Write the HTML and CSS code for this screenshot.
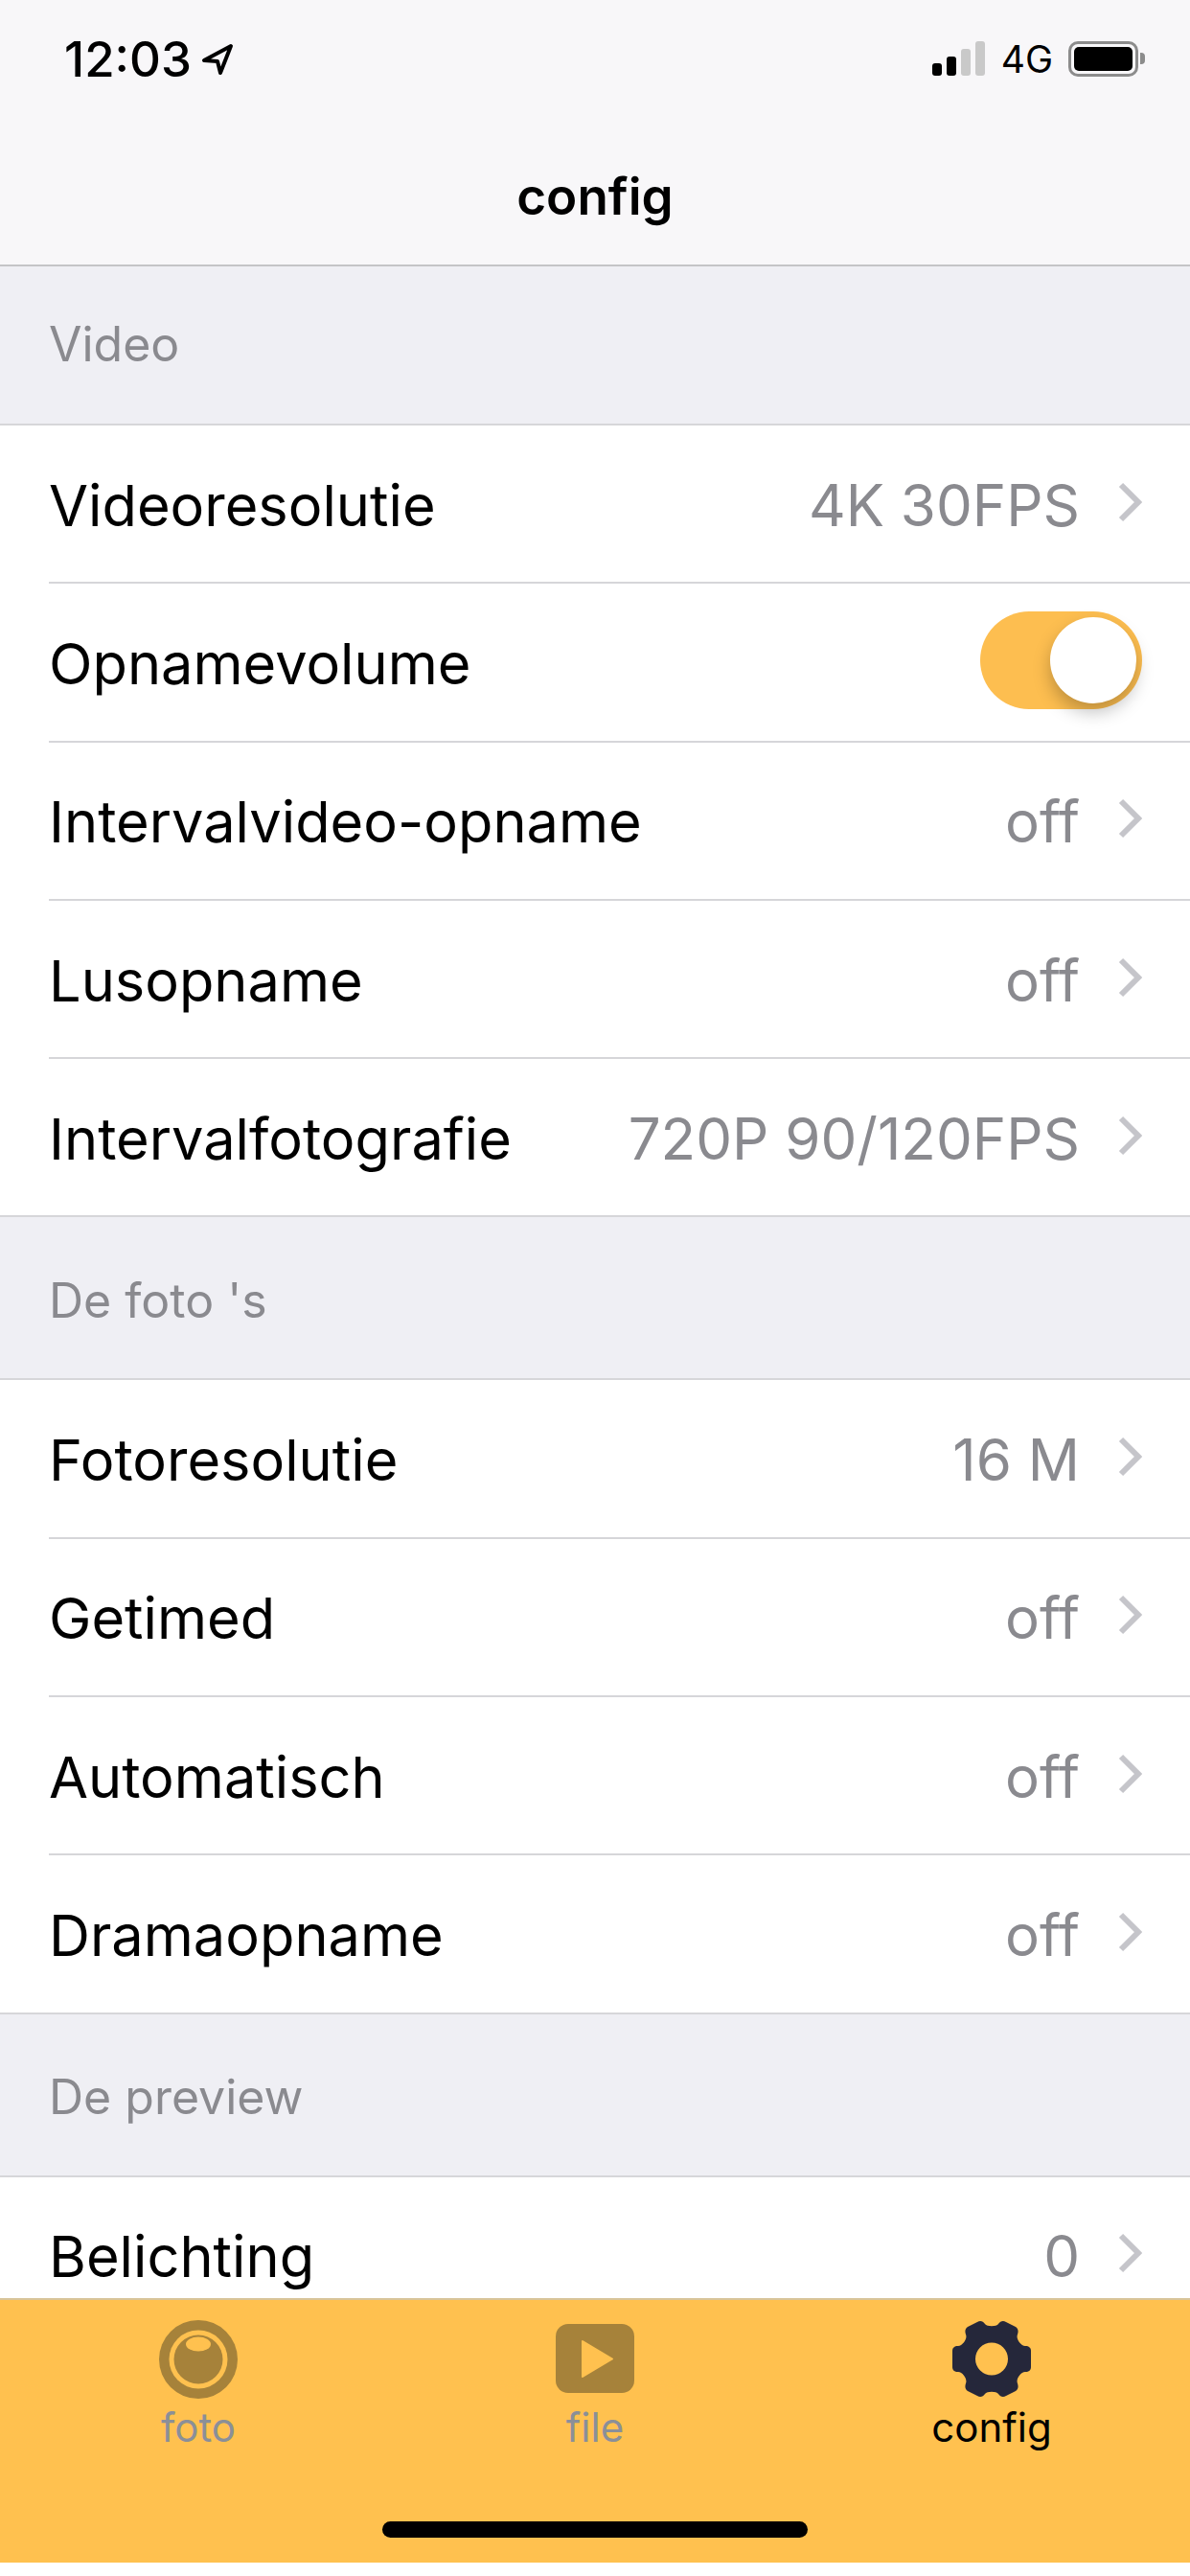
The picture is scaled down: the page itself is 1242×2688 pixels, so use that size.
FILE: index.html
```html
<!DOCTYPE html>
<html lang="en">
<head>
  <meta charset="UTF-8" />
  <meta name="viewport" content="width=device-width, initial-scale=1.0"/>
  <title>config</title>
  <link rel="stylesheet" href="styles.css">
</head>
<body>

  <div class="screen">
    <header class="topbar">
      <div class="status">
        <div class="status-left">
          <span class="clock">12:03</span>
          <svg class="locate" viewBox="0 0 34 34" width="34" height="34"><path d="M31 3 L3 18 L17 19 L20 31 Z" fill="none" stroke="#000" stroke-width="4" stroke-linejoin="round"/></svg>
        </div>
        <div class="status-right">
          <div class="signal">
            <i class="bar bar-1"></i>
            <i class="bar bar-2"></i>
            <i class="bar bar-3"></i>
            <i class="bar bar-4"></i>
          </div>
          <span class="network">4G</span>
          <div class="battery"><div class="battery-fill"></div></div>
          <div class="battery-cap"></div>
        </div>
      </div>
      <div class="nav-title">config</div>
    </header>

    <main class="list">
      <div class="section first">Video</div>
      <div class="row">
        <span class="label">Videoresolutie</span>
        <span class="value">4K 30FPS</span>
        <svg class="chevron" viewBox="0 0 26 44" width="26" height="44"><path d="M4 4 L22 22 L4 40" /></svg>
      </div>
      <div class="row">
        <span class="label">Opnamevolume</span>
        <div class="toggle"><div class="knob"></div></div>
      </div>
      <div class="row">
        <span class="label">Intervalvideo-opname</span>
        <span class="value">off</span>
        <svg class="chevron" viewBox="0 0 26 44" width="26" height="44"><path d="M4 4 L22 22 L4 40" /></svg>
      </div>
      <div class="row">
        <span class="label">Lusopname</span>
        <span class="value">off</span>
        <svg class="chevron" viewBox="0 0 26 44" width="26" height="44"><path d="M4 4 L22 22 L4 40" /></svg>
      </div>
      <div class="row last">
        <span class="label">Intervalfotografie</span>
        <span class="value">720P 90/120FPS</span>
        <svg class="chevron" viewBox="0 0 26 44" width="26" height="44"><path d="M4 4 L22 22 L4 40" /></svg>
      </div>

      <div class="section">De foto 's</div>
      <div class="row">
        <span class="label">Fotoresolutie</span>
        <span class="value">16 M</span>
        <svg class="chevron" viewBox="0 0 26 44" width="26" height="44"><path d="M4 4 L22 22 L4 40" /></svg>
      </div>
      <div class="row">
        <span class="label">Getimed</span>
        <span class="value">off</span>
        <svg class="chevron" viewBox="0 0 26 44" width="26" height="44"><path d="M4 4 L22 22 L4 40" /></svg>
      </div>
      <div class="row">
        <span class="label">Automatisch</span>
        <span class="value">off</span>
        <svg class="chevron" viewBox="0 0 26 44" width="26" height="44"><path d="M4 4 L22 22 L4 40" /></svg>
      </div>
      <div class="row last">
        <span class="label">Dramaopname</span>
        <span class="value">off</span>
        <svg class="chevron" viewBox="0 0 26 44" width="26" height="44"><path d="M4 4 L22 22 L4 40" /></svg>
      </div>

      <div class="section">De preview</div>
      <div class="row last">
        <span class="label">Belichting</span>
        <span class="value">0</span>
        <svg class="chevron" viewBox="0 0 26 44" width="26" height="44"><path d="M4 4 L22 22 L4 40" /></svg>
      </div>
    </main>

    <footer class="tabbar">
      <div class="tabs">
        <div class="tab">
          <svg viewBox="0 0 84 84" width="84" height="84">
            <circle cx="42" cy="42" r="41" fill="#a6823a"/>
            <circle cx="42" cy="42" r="30.5" fill="#ffc14f"/>
            <circle cx="42" cy="42" r="25.5" fill="#a6823a"/>
            <ellipse cx="42" cy="26" rx="13" ry="7.5" fill="#ffc14f"/>
          </svg>
          <span class="tab-label">foto</span>
        </div>
        <div class="tab">
          <svg viewBox="0 0 84 84" width="84" height="84">
            <rect x="1" y="5" width="82" height="72" rx="13" fill="#a6823a"/>
            <path d="M29 23 L60 41.5 L29 60 Z" fill="#ffc14f" stroke="#ffc14f" stroke-width="2" stroke-linejoin="round"/>
          </svg>
          <span class="tab-label">file</span>
        </div>
        <div class="tab active">
          <svg viewBox="0 0 84 84" width="84" height="84">
            <path fill-rule="evenodd" fill="#25273a" d="M27 3 C30 1 33 2 35 5 C37 8 47 8 49 5 C51 2 54 1 57 3 L67 8 C70 10 70 13 69 16 C67 20 72 28 77 28 C81 28 83 30 83 33 L83 50 C83 53 81 55 77 55 C72 55 67 63 69 67 C70 70 70 73 67 75 L57 80 C54 82 51 81 49 78 C47 75 37 75 35 78 C33 81 30 82 27 80 L17 75 C14 73 14 70 15 67 C17 63 12 55 7 55 C3 55 1 53 1 50 L1 33 C1 30 3 28 7 28 C12 28 17 20 15 16 C14 13 14 10 17 8 Z M42 24.5 A17 17 0 1 0 42 58.5 A17 17 0 1 0 42 24.5 Z"/>
          </svg>
          <span class="tab-label">config</span>
        </div>
      </div>
      <div class="home-bar"></div>
    </footer>
  </div>

</body>
</html>
```

FILE: styles.css
```css
* { box-sizing: border-box; }

body {
  margin: 0;
  background: #ffffff;
  font-family: 'Inter', 'Liberation Sans', sans-serif;
  color: #000000;
}

.screen {
  width: 1242px;
  height: 2688px;
  display: flex;
  flex-direction: column;
  overflow: hidden;
}

/* top bar */
.topbar {
  height: 278px;
  flex: none;
  background: #f8f7f9;
  border-bottom: 2px solid #c4c4c6;
}

.status {
  height: 124px;
  display: flex;
  justify-content: space-between;
  align-items: flex-start;
  padding: 38px 47px 0 67px;
}

.status-left {
  display: flex;
  align-items: center;
  gap: 10px;
}

.clock {
  font-size: 51px;
  line-height: 48px;
  font-weight: 500;
}

.status-right {
  display: flex;
  align-items: center;
  height: 46px;
}

.signal {
  display: flex;
  align-items: flex-end;
  gap: 5px;
  height: 36px;
  margin-right: 17px;
}

.bar {
  width: 10px;
  border-radius: 3px;
  background: #000000;
}

.bar-1 { height: 13px; }
.bar-2 { height: 20px; }
.bar-3 { height: 28px; background: #c9c9c9; }
.bar-4 { height: 36px; background: #c9c9c9; }

.network {
  font-size: 39px;
  margin-right: 16px;
}

.battery {
  width: 73px;
  height: 37px;
  border: 3px solid #8c8c8c;
  border-radius: 10px;
  padding: 3px;
}

.battery-fill {
  height: 100%;
  background: #000000;
  border-radius: 5px;
}

.battery-cap {
  width: 5px;
  height: 12px;
  margin-left: 2px;
  background: #8c8c8c;
  border-radius: 0 4px 4px 0;
}

.nav-title {
  text-align: center;
  font-size: 53px;
  line-height: 64px;
  font-weight: 600;
  margin-top: 49px;
}

/* settings list */
.list {
  flex: 1;
  min-height: 0;
  overflow: hidden;
  background: #ffffff;
}

.section {
  height: 170px;
  padding: 5px 51px 0;
  display: flex;
  align-items: center;
  background: #efeff4;
  border-bottom: 2px solid #d6d6d9;
  color: #8a8a8f;
  font-size: 50px;
}

.section.first {
  height: 166px;
  padding: 0 51px 2px;
}

.row {
  height: 165.3px;
  margin-left: 51px;
  padding: 2px 50px 0 0;
  display: flex;
  align-items: center;
  border-bottom: 2px solid #d6d6d9;
}

.row.last {
  margin-left: 0;
  padding-left: 51px;
}

.label {
  flex: 1;
  font-size: 59.5px;
}

.value {
  color: #8a8a8f;
  font-size: 60px;
  margin-right: 39px;
}

.chevron {
  flex: none;
  margin-bottom: 6px;
}

.chevron path {
  fill: none;
  stroke: #c5c5ca;
  stroke-width: 6;
}

.toggle {
  width: 169px;
  height: 102px;
  margin-bottom: 6px;
  padding: 6px;
  border-radius: 51px;
  background: #fdbe50;
  display: flex;
  justify-content: flex-end;
}

.knob {
  width: 90px;
  height: 90px;
  border-radius: 50%;
  background: #ffffff;
  box-shadow: 0 9px 18px rgba(0, 0, 0, 0.25);
}

/* tab bar */
.tabbar {
  height: 276px;
  flex: none;
  margin-bottom: 14px;
  background: #ffc14f;
  border-top: 2px solid #d8c49a;
}

.tabs {
  display: grid;
  grid-template-columns: repeat(3, 1fr);
  padding-top: 20px;
}

.tab {
  display: flex;
  flex-direction: column;
  align-items: center;
}

.tab-label {
  font-size: 42px;
  line-height: 46px;
  color: #8b8f98;
  margin-top: 6px;
}

.tab.active .tab-label {
  color: #000000;
}

.home-bar {
  width: 444px;
  height: 17px;
  margin: 75px auto 0;
  border-radius: 9px;
  background: #000000;
}
```
